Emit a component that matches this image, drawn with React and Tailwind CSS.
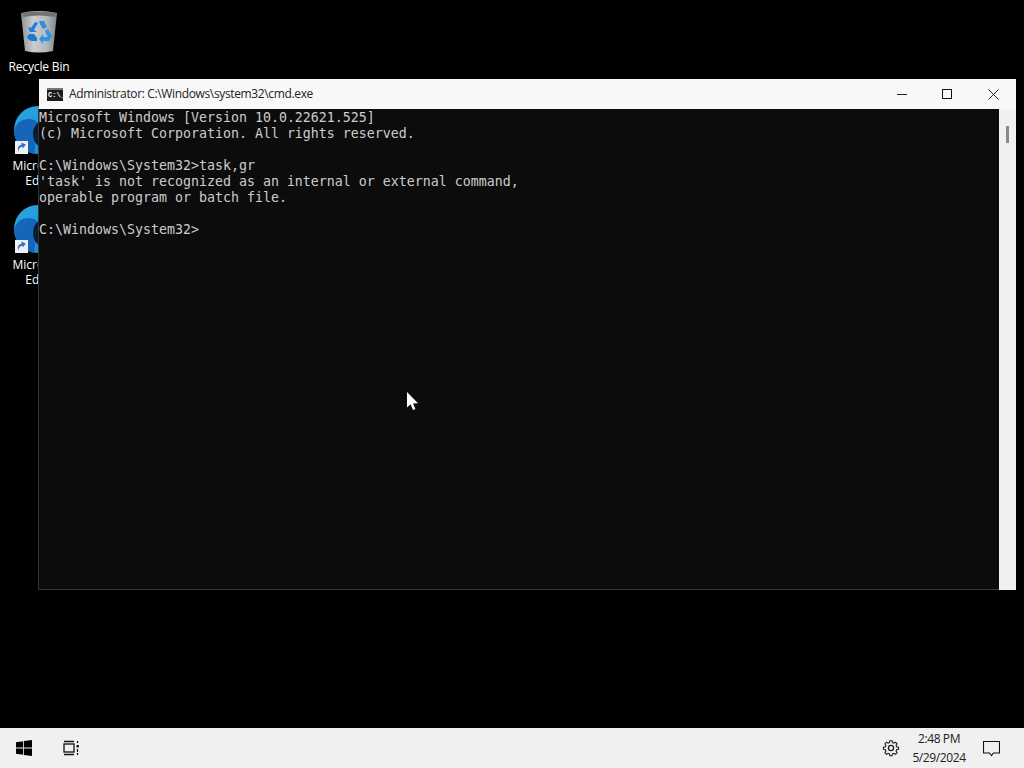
import React from "react";

const consoleLines = [
  "Microsoft Windows [Version 10.0.22621.525]",
  "(c) Microsoft Corporation. All rights reserved.",
  "",
  "C:\\Windows\\System32>task,gr",
  "'task' is not recognized as an internal or external command,",
  "operable program or batch file.",
  "",
  "C:\\Windows\\System32>",
];

function RecycleBinIcon() {
  return (
    <svg width="38" height="44" viewBox="0 0 38 44">
      <defs>
        <linearGradient id="binBody" x1="0" y1="0" x2="1" y2="0">
          <stop offset="0" stopColor="#8f9496" />
          <stop offset="0.35" stopColor="#c9cccd" />
          <stop offset="0.7" stopColor="#b6babb" />
          <stop offset="1" stopColor="#7f8486" />
        </linearGradient>
      </defs>
      <path d="M1 3 Q19 -1 37 3 L33 41 Q19 44 5 41 Z" fill="url(#binBody)" />
      <path d="M2 3 Q19 0 36 3 L35 7 Q19 4 3 7 Z" fill="#6f7476" />
      <path d="M19 11 L24 11 L27 17 L23 19 L20 14 Z" fill="#2d8fe0" />
      <path d="M15 12 L18 13 L14 20 L17 22 L10 22 L8 17 L11 18 Z" fill="#1f7fd8" />
      <path d="M28 19 L32 26 L29 31 L23 31 L23 34 L19 29 L23 24 L23 27 L28 27 L25 21 Z" fill="#2a96ea" />
      <path d="M9 24 L14 24 L17 28 L17 31 L12 31 Q8 30 7 27 Z" fill="#1c78d2" />
    </svg>
  );
}

function EdgeIcon() {
  return (
    <svg width="48" height="48" viewBox="0 0 48 48">
      <defs>
        <linearGradient id="edgeTop" x1="0" y1="0" x2="1" y2="1">
          <stop offset="0" stopColor="#2aa9e0" />
          <stop offset="1" stopColor="#1a86d6" />
        </linearGradient>
      </defs>
      <circle cx="24" cy="24" r="24" fill="url(#edgeTop)" />
      <path d="M0 26 Q2 14 14 13 Q22 13 24 18 L20 48 Q2 44 0 26 Z" fill="#1565b8" />
      <ellipse cx="31" cy="28" rx="12" ry="14" fill="#0a1c30" />
    </svg>
  );
}

function ShortcutArrow() {
  return (
    <div className="absolute bottom-0 left-[15px] w-[13px] h-[13px] bg-[#eef1f5] flex items-center justify-center">
      <svg width="11" height="11" viewBox="0 0 10 10">
        <path d="M2 9 Q2 5 6 4 L6 6 L9 2.5 L5 0.5 L5 2.5 Q0.5 3.5 2 9 Z" fill="#2a6fc4" />
      </svg>
    </div>
  );
}

function EdgeShortcut({ top }) {
  return (
    <div className={`absolute left-0 w-[78px] flex flex-col items-center ${top}`}>
      <div className="w-full h-[48px] relative">
        <div className="absolute left-[14px] top-0">
          <EdgeIcon />
        </div>
        <ShortcutArrow />
      </div>
      <div className="mt-[4px] text-white text-[12px] leading-[15px] text-center">
        Microsoft
        <br />
        Edge
      </div>
    </div>
  );
}

function CmdIcon() {
  return (
    <div className="w-[16px] h-[13px] bg-[#1c1c1c] border-t-2 border-[#777] flex items-center px-[1px]">
      <span className="text-white text-[7px] leading-none font-bold font-['Liberation_Mono',monospace]">C:\_</span>
    </div>
  );
}

function CmdWindow() {
  return (
    <div className="absolute left-[39px] top-[79px] w-[977px] h-[511px] flex flex-col bg-[#f0f0f0]">
      <div className="h-[30px] shrink-0 flex items-center bg-[#f8f8f8]">
        <div className="ml-[8px] mr-[6px]">
          <CmdIcon />
        </div>
        <span className="text-[12px] text-[#222] font-['Open_Sans',sans-serif] tracking-[-0.36px]">
          Administrator: C:\Windows\system32\cmd.exe
        </span>
        <div className="ml-auto flex items-center h-full">
          <div className="w-[46px] flex justify-center">
            <svg width="10" height="10" viewBox="0 0 10 10">
              <path d="M0 5.5 H10" stroke="#222" strokeWidth="1" />
            </svg>
          </div>
          <div className="w-[44px] flex justify-center">
            <svg width="10" height="10" viewBox="0 0 10 10">
              <rect x="0.5" y="0.5" width="9" height="9" fill="none" stroke="#111" strokeWidth="1" />
            </svg>
          </div>
          <div className="w-[47px] pl-[1px] flex justify-center">
            <svg width="11" height="11" viewBox="0 0 11 11">
              <path d="M0.5 0.5 L10.5 10.5 M10.5 0.5 L0.5 10.5" stroke="#222" strokeWidth="1" />
            </svg>
          </div>
        </div>
      </div>
      <div className="flex-1 flex min-h-0">
        <div className="flex-1 bg-[#0c0c0c] pt-px border-b border-[#3a3a3a] shadow-[-1px_0_0_#333] text-[#cccccc] font-['DejaVu_Sans_Mono',monospace] text-[13.29px] leading-[16px] whitespace-pre">
          {consoleLines.map((line, i) => (
            <div key={i} className="h-[16px]">
              {line}
            </div>
          ))}
        </div>
        <div className="w-[17px] bg-[#f0f0f0] flex justify-center pt-[17px]">
          <div className="w-[3px] h-[17px] bg-[#8a8a8a]" />
        </div>
      </div>
    </div>
  );
}

function Taskbar() {
  return (
    <div className="h-[40px] shrink-0 bg-[#f0f0f0] flex items-center">
      <div className="ml-[16px]">
        <svg width="16" height="16" viewBox="0 0 16 16">
          <path d="M0 2.2 L7.2 1.2 V7.5 H0 Z M8 1.1 L16 0 V7.5 H8 Z M0 8.5 H7.2 V14.8 L0 13.8 Z M8 8.5 H16 V16 L8 14.9 Z" fill="#000" />
        </svg>
      </div>
      <div className="ml-[31px]">
        <svg width="17" height="16" viewBox="0 0 17 16" fill="none" stroke="#111" strokeWidth="1.3">
          <rect x="1" y="4" width="10" height="8" />
          <path d="M1 1.5 H11 M1 14.5 H11" />
          <path d="M14.5 1 V3 M14.5 13 V15" />
          <rect x="13.5" y="5" width="2.4" height="2.4" fill="#111" stroke="none" />
          <path d="M14.5 9 V12" />
        </svg>
      </div>
      <div className="ml-auto flex items-center">
        <svg width="18" height="18" viewBox="0 0 24 24" fill="none" stroke="#222" strokeWidth="1.7">
          <circle cx="12" cy="12" r="3.4" />
          <path d="M10.3 2.5 h3.4 l.6 2.8 2 .9 2.5-1.5 2.4 2.4-1.5 2.5 .9 2 2.8.6 v3.4 l-2.8.6-.9 2 1.5 2.5-2.4 2.4-2.5-1.5-2 .9-.6 2.8 h-3.4 l-.6-2.8-2-.9-2.5 1.5-2.4-2.4 1.5-2.5-.9-2-2.8-.6 v-3.4 l2.8-.6 .9-2-1.5-2.5 2.4-2.4 2.5 1.5 2-.9 Z" transform="translate(12 12) scale(.88) translate(-12 -13.5)" />
        </svg>
        <div className="w-[72px] ml-[3px] text-center text-[12px] leading-[19px] text-[#222] font-['Open_Sans',sans-serif] tracking-[-0.4px]">
          <div>2:48 PM</div>
          <div>5/29/2024</div>
        </div>
        <div className="ml-[8px] mr-[24px]">
          <svg width="17" height="17" viewBox="0 0 17 17" fill="none" stroke="#111" strokeWidth="1.1">
            <path d="M0.5 1.5 H16.5 V13 H10.5 L8.5 15.5 L6.5 13 H0.5 Z" />
          </svg>
        </div>
      </div>
    </div>
  );
}

export default function App() {
  return (
    <div className="w-[1024px] h-[768px] flex flex-col bg-black overflow-hidden font-['Open_Sans',sans-serif]">
      <div className="flex-1 relative">
        <div className="absolute left-0 top-[10px] w-[78px] flex flex-col items-center">
          <RecycleBinIcon />
          <div className="mt-[5px] text-white text-[12px] tracking-[-0.15px] leading-[15px]">Recycle Bin</div>
        </div>
        <EdgeShortcut top="top-[106px]" />
        <EdgeShortcut top="top-[205px]" />
        <CmdWindow />
        <svg className="absolute left-[407px] top-[392px]" width="12" height="19" viewBox="0 0 12 19">
          <path d="M0 0 V15.5 L3.6 12.2 L6 18 L8.4 17 L6 11.4 L11 11.2 Z" fill="#fff" />
        </svg>
      </div>
      <Taskbar />
    </div>
  );
}
